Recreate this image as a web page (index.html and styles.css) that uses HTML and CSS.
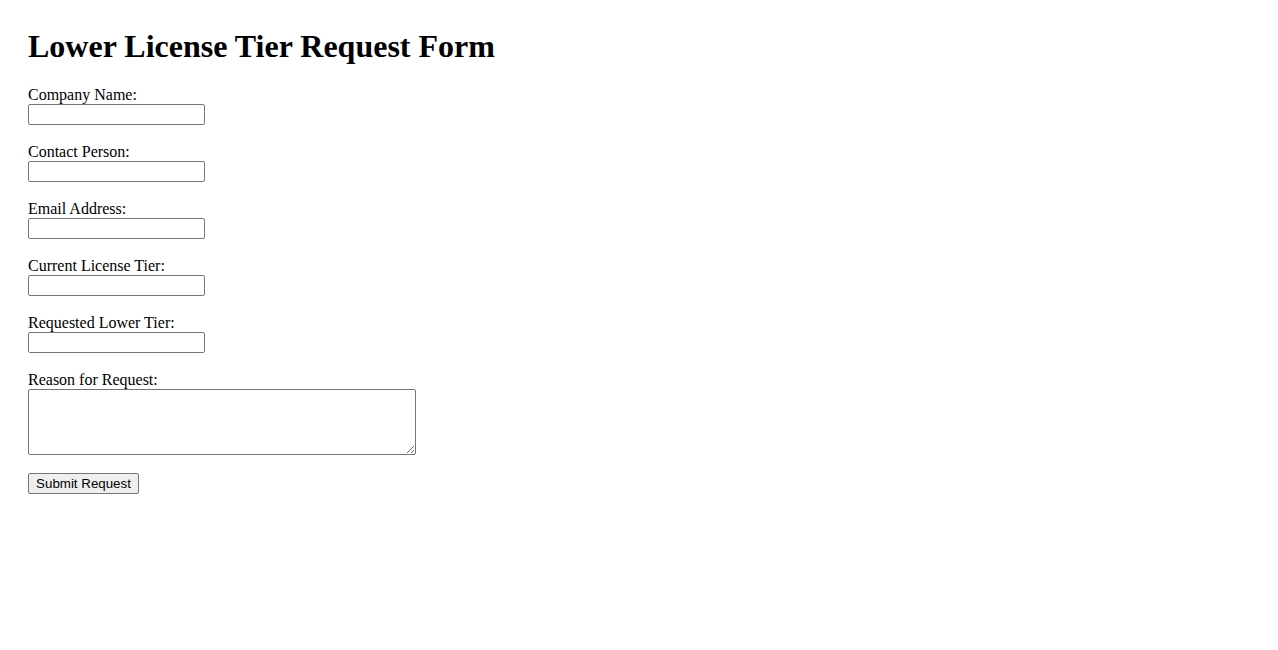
FILE: index.html
```html
<!DOCTYPE html>
<html lang="en">
<head>
<meta charset="utf-8">
<title>Lower License Tier Request Form</title>
<link rel="stylesheet" href="styles.css">
</head>
<body>
<h1 class="title">Lower License Tier Request Form</h1>
<form class="form">
  <div class="field">
    <label class="label" for="company">Company Name:</label>
    <input class="input" type="text" id="company">
  </div>
  <div class="field">
    <label class="label" for="contact">Contact Person:</label>
    <input class="input" type="text" id="contact">
  </div>
  <div class="field">
    <label class="label" for="email">Email Address:</label>
    <input class="input" type="email" id="email">
  </div>
  <div class="field">
    <label class="label" for="current">Current License Tier:</label>
    <input class="input" type="text" id="current">
  </div>
  <div class="field">
    <label class="label" for="requested">Requested Lower Tier:</label>
    <input class="input" type="text" id="requested">
  </div>
  <div class="field">
    <label class="label" for="reason">Reason for Request:</label>
    <textarea class="textarea" id="reason"></textarea>
  </div>
  <button class="button" type="submit">Submit Request</button>
</form>
</body>
</html>
```
FILE: styles.css
```css
html, body {
  background: #ffffff;
}
body {
  margin: 0;
  padding: 28px;
  font-family: "Liberation Serif", "Times New Roman", serif;
  font-size: 16px;
  color: #000000;
}
.title {
  margin: 0 0 21px;
  font-size: 32px;
  line-height: 37px;
  font-weight: bold;
}
.form {
  margin: 0;
}
.field {
  margin-bottom: 18px;
}
.label {
  display: block;
  height: 18px;
  line-height: 18px;
}
.input {
  display: block;
  box-sizing: border-box;
  width: 177px;
  height: 21px;
  margin: 0;
  padding: 1px 2px;
  border: 1px solid #767676;
  border-radius: 2px;
  font-family: "Liberation Sans", Arial, sans-serif;
  font-size: 13.333px;
  background: #ffffff;
}
.textarea {
  display: block;
  box-sizing: border-box;
  width: 388px;
  height: 66px;
  margin: 0;
  padding: 2px;
  border: 1px solid #767676;
  border-radius: 2px;
  font-family: "Liberation Mono", monospace;
  font-size: 13.333px;
  background: #ffffff;
}
.button {
  display: block;
  box-sizing: border-box;
  width: 111px;
  height: 21px;
  margin: 0;
  padding: 1px 6px;
  border: 1px solid #767676;
  border-radius: 2px;
  background: #efefef;
  font-family: "Liberation Sans", Arial, sans-serif;
  font-size: 13.333px;
  color: #000000;
}
```
